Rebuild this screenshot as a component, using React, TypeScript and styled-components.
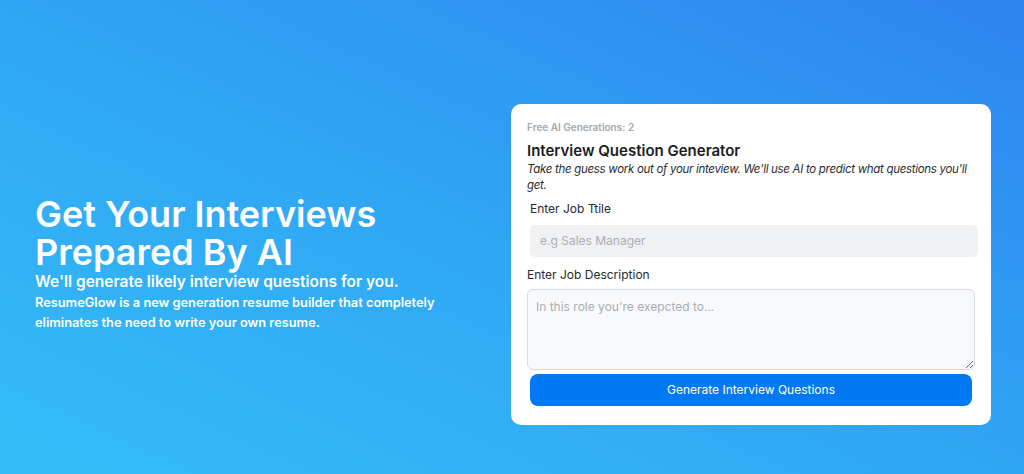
import React from "react";
import styled, { createGlobalStyle, css } from "styled-components";

const GlobalStyle = createGlobalStyle`
  * { box-sizing: border-box; }
  html, body { margin: 0; padding: 0; }
  body {
    font-family: Inter, "Noto Sans", "Liberation Sans", sans-serif;
    -webkit-font-smoothing: antialiased;
  }
`;

function App() {
  return (
    <>
      <GlobalStyle />
      <Page>
        <Hero>
          <Headline>
            Get Your Interviews
            <br />
            Prepared By AI
          </Headline>
          <Subhead>We'll generate likely interview questions for you.</Subhead>
          <Blurb>
            ResumeGlow is a new generation resume builder that completely
            eliminates the need to write your own resume.
          </Blurb>
        </Hero>
        <Card>
          <Credits>Free AI Generations: 2</Credits>
          <CardTitle>Interview Question Generator</CardTitle>
          <CardText>
            Take the guess work out of your inteview. We'll use AI to predict
            what questions you'll get.
          </CardText>
          <Label indent={3} top={8}>
            Enter Job Ttile
          </Label>
          <TextInput placeholder="e.g Sales Manager" />
          <Label top={10}>Enter Job Description</Label>
          <TextArea placeholder="In this role you're exepcted to..." />
          <SubmitButton type="button">Generate Interview Questions</SubmitButton>
        </Card>
      </Page>
    </>
  );
}

export default App;

const Page = styled.div(
  () => css`
    width: 100%;
    height: 474px;
    padding: 54px 33px 0 35px;
    display: flex;
    align-items: center;
    justify-content: space-between;
    background: linear-gradient(to top right, #33bdf8 0%, #30a8f4 45%, #2d84ee 100%);
  `
);

const Hero = styled.div(
  () => css`
    width: 440px;
    display: flex;
    flex-direction: column;
    color: #ffffff;
  `
);

const Headline = styled.h1(
  () => css`
    margin: 0;
    font-size: 36px;
    font-weight: 600;
    line-height: 38px;
  `
);

const Subhead = styled.p(
  () => css`
    margin: 0;
    font-size: 15.5px;
    font-weight: 600;
    line-height: 22px;
  `
);

const Blurb = styled.p(
  () => css`
    margin: 0;
    font-size: 12.8px;
    font-weight: 600;
    line-height: 20px;
  `
);

const Card = styled.div(
  () => css`
    width: 480px;
    background: #ffffff;
    border-radius: 10px;
    padding: 16px 16px 19px 16px;
    display: flex;
    flex-direction: column;
  `
);

const Credits = styled.div(
  () => css`
    font-size: 10px;
    font-weight: 600;
    line-height: 14px;
    color: #a3a8b1;
  `
);

const CardTitle = styled.h2(
  () => css`
    margin: 7px 0 0 0;
    font-size: 15px;
    font-weight: 600;
    line-height: 20px;
    color: #1a1d21;
  `
);

const CardText = styled.p(
  () => css`
    margin: 0;
    font-size: 11.5px;
    font-style: italic;
    line-height: 16px;
    letter-spacing: -0.3px;
    color: #2a2d31;
  `
);

const Label = styled.label<{ indent?: number; top?: number }>(
  ({ indent = 0, top = 0 }) => css`
    display: block;
    margin: ${top}px 0 0 ${indent}px;
    font-size: 12px;
    line-height: 16px;
    color: #26292d;
  `
);

const fieldText = css`
  font-family: Inter, "Noto Sans", "Liberation Sans", sans-serif;
  font-size: 12px;
  color: #26292d;
  outline: none;
  &::placeholder {
    color: #a9aeb6;
  }
`;

const TextInput = styled.input(
  () => css`
    ${fieldText};
    margin: 8px 0 0 3px;
    width: 448px;
    height: 32px;
    padding: 0 10px;
    border: none;
    border-radius: 5px;
    background: #f0f1f3;
  `
);

const TextArea = styled.textarea(
  () => css`
    ${fieldText};
    display: block;
    margin-top: 6px;
    width: 448px;
    height: 81px;
    padding: 9px 8px;
    border: 1px solid #d7dadf;
    border-radius: 6px;
    background: #f8f9fb;
    resize: vertical;
  `
);

const SubmitButton = styled.button(
  () => css`
    margin: 4px 0 0 3px;
    width: 442px;
    height: 32px;
    border: none;
    border-radius: 8px;
    background: #0079f2;
    color: #ffffff;
    font-family: Inter, "Noto Sans", "Liberation Sans", sans-serif;
    font-size: 12px;
    cursor: pointer;
  `
);
